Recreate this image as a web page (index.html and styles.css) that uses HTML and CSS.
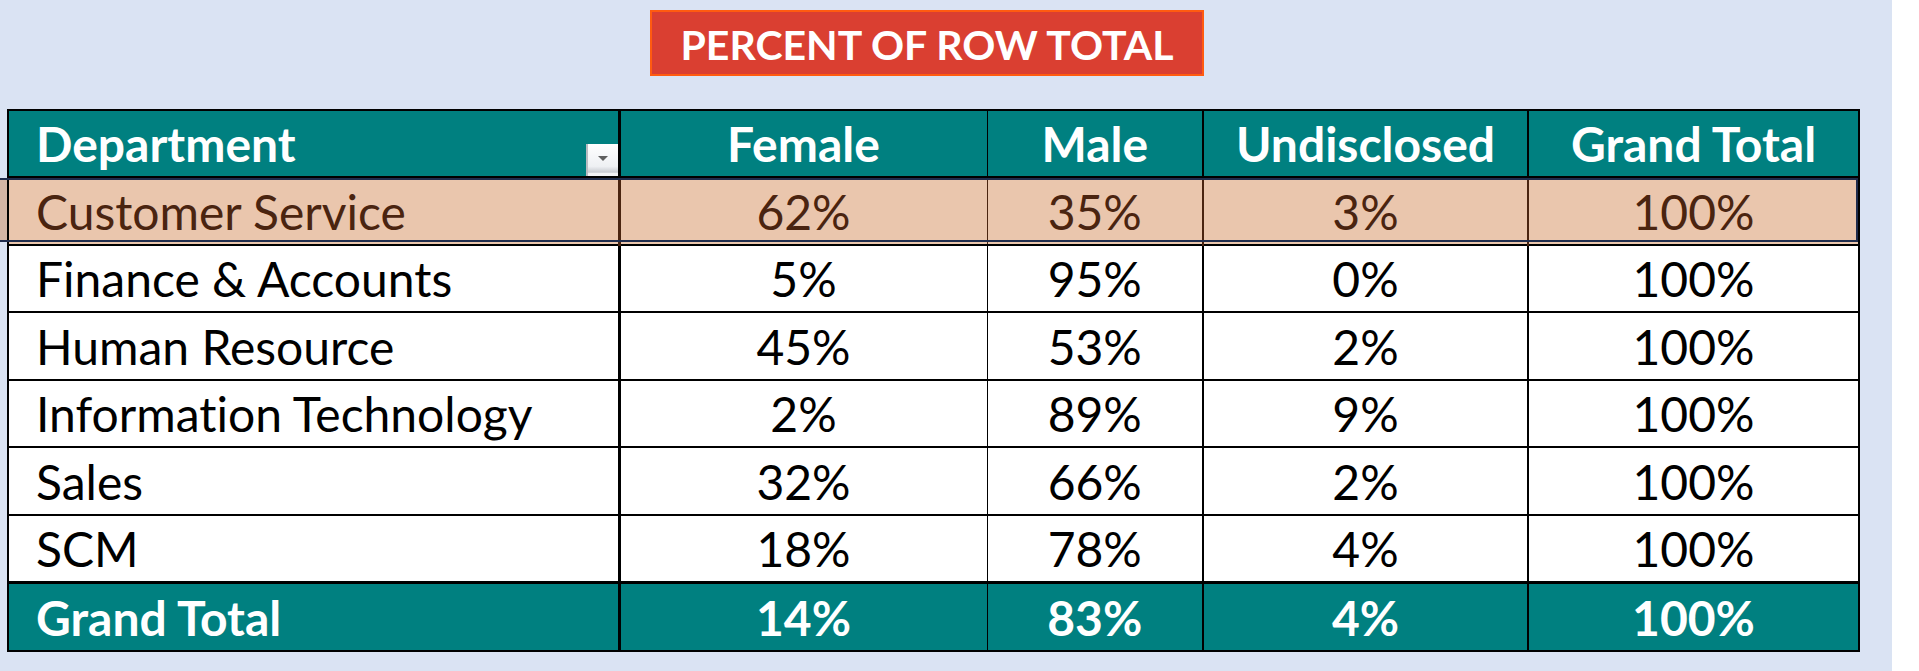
FILE: index.html
```html
<!DOCTYPE html>
<html lang="en">
<head>
<meta charset="utf-8">
<title>Percent of Row Total</title>
<link rel="stylesheet" href="styles.css">
</head>
<body>
<div class="sheet">
  <div class="title-row">
    <div class="title">PERCENT OF ROW TOTAL</div>
  </div>
  <table class="pivot">
    <colgroup>
      <col class="c-dept">
      <col class="c-female">
      <col class="c-male">
      <col class="c-undisc">
      <col class="c-total">
    </colgroup>
    <thead>
      <tr>
        <th class="dept">Department<span class="filter-btn"><svg width="10" height="6" viewBox="0 0 10 6"><path d="M0 0H10L5 5Z" fill="#5f5f5f"/></svg></span></th>
        <th>Female</th>
        <th>Male</th>
        <th>Undisclosed</th>
        <th>Grand Total</th>
      </tr>
    </thead>
    <tbody>
      <tr class="selected">
        <td class="dept">Customer Service</td><td>62%</td><td>35%</td><td>3%</td><td>100%</td>
      </tr>
      <tr>
        <td class="dept">Finance &amp; Accounts</td><td>5%</td><td>95%</td><td>0%</td><td>100%</td>
      </tr>
      <tr>
        <td class="dept">Human Resource</td><td>45%</td><td>53%</td><td>2%</td><td>100%</td>
      </tr>
      <tr>
        <td class="dept">Information Technology</td><td>2%</td><td>89%</td><td>9%</td><td>100%</td>
      </tr>
      <tr>
        <td class="dept">Sales</td><td>32%</td><td>66%</td><td>2%</td><td>100%</td>
      </tr>
      <tr>
        <td class="dept">SCM</td><td>18%</td><td>78%</td><td>4%</td><td>100%</td>
      </tr>
    </tbody>
    <tfoot>
      <tr>
        <td class="dept">Grand Total</td><td>14%</td><td>83%</td><td>4%</td><td>100%</td>
      </tr>
    </tfoot>
  </table>
  <div class="selection"></div>
</div>
</body>
</html>
```

FILE: styles.css
```css
html, body {
  margin: 0;
  padding: 0;
  background: #ffffff;
}

.sheet {
  position: relative;
  width: 1892px;
  height: 671px;
  background: #dae3f3;
  font-family: Lato, "Open Sans", sans-serif;
  font-variant-ligatures: none;
  font-feature-settings: "liga" 0, "clig" 0;
  overflow: hidden;
}

.title-row {
  display: flex;
  padding-top: 10px;
  padding-left: 650px;
  height: 66px;
  margin-bottom: 33px;
}

.title {
  box-sizing: border-box;
  width: 554px;
  height: 66px;
  background: #da3f31;
  border: 2px solid #ff5b10;
  color: #ffffff;
  font-weight: 700;
  font-size: 41px;
  display: flex;
  align-items: center;
  justify-content: center;
  padding-top: 2px;
}

.pivot {
  margin-left: 7px;
  width: 1851px;
  table-layout: fixed;
  border-collapse: collapse;
  border: 2px solid #000;
  font-size: 48px;
  line-height: 1;
}

.c-dept { width: 611px; }
.c-female { width: 368px; }
.c-male { width: 216px; }
.c-undisc { width: 325px; }
.c-total { width: 331px; }

.pivot th,
.pivot td {
  padding: 0 0 8px 0;
  text-align: center;
  vertical-align: bottom;
  white-space: nowrap;
}

.pivot .dept {
  text-align: left;
  padding-left: 27px;
}

.pivot thead tr { height: 67px; }
.pivot tbody tr { height: 67.6px; }
.pivot tfoot tr { height: 68px; }

.pivot thead th {
  background: #008080;
  color: #ffffff;
  font-weight: 700;
  border-bottom: 2px solid #000;
  border-left: 1px solid #000;
  position: relative;
}

.pivot td {
  background: #ffffff;
  color: #000000;
  border-top: 2px solid #000;
  border-left: 1px solid #000;
}

.pivot th:nth-child(2),
.pivot td:nth-child(2) { border-left: 3px solid #000; }
.pivot th:nth-child(4),
.pivot td:nth-child(4),
.pivot th:nth-child(5),
.pivot td:nth-child(5) { border-left: 2px solid #000; }

.pivot tr.selected td {
  background: #eac6ad;
  color: #4a2410;
  border-left-color: #4a2410;
}
.pivot tr.selected td.dept { border-left-color: #000; }

.pivot tfoot td {
  background: #008080;
  color: #ffffff;
  font-weight: 700;
  border-top: 3px solid #000;
}

.filter-btn {
  position: absolute;
  right: 0;
  bottom: 0;
  box-sizing: border-box;
  width: 32px;
  height: 32px;
  background: linear-gradient(#ffffff, #eef0f3 70%, #c9ccd2 88%, #f2f3f5 92%);
  border-left: 2px solid #b9bcc2;
  display: flex;
  align-items: flex-start;
  justify-content: center;
  padding-top: 12px;
}

.selection {
  position: absolute;
  left: 0;
  top: 178px;
  width: 1858px;
  height: 64px;
  box-sizing: border-box;
  border-top: 2px solid #1f2c4c;
  border-bottom: 2px solid #1f2c4c;
  border-right: 2px solid #1f2c4c;
  background: linear-gradient(to right, #d3b6a6 0, #d3b6a6 7px, transparent 7px);
  pointer-events: none;
}
```
